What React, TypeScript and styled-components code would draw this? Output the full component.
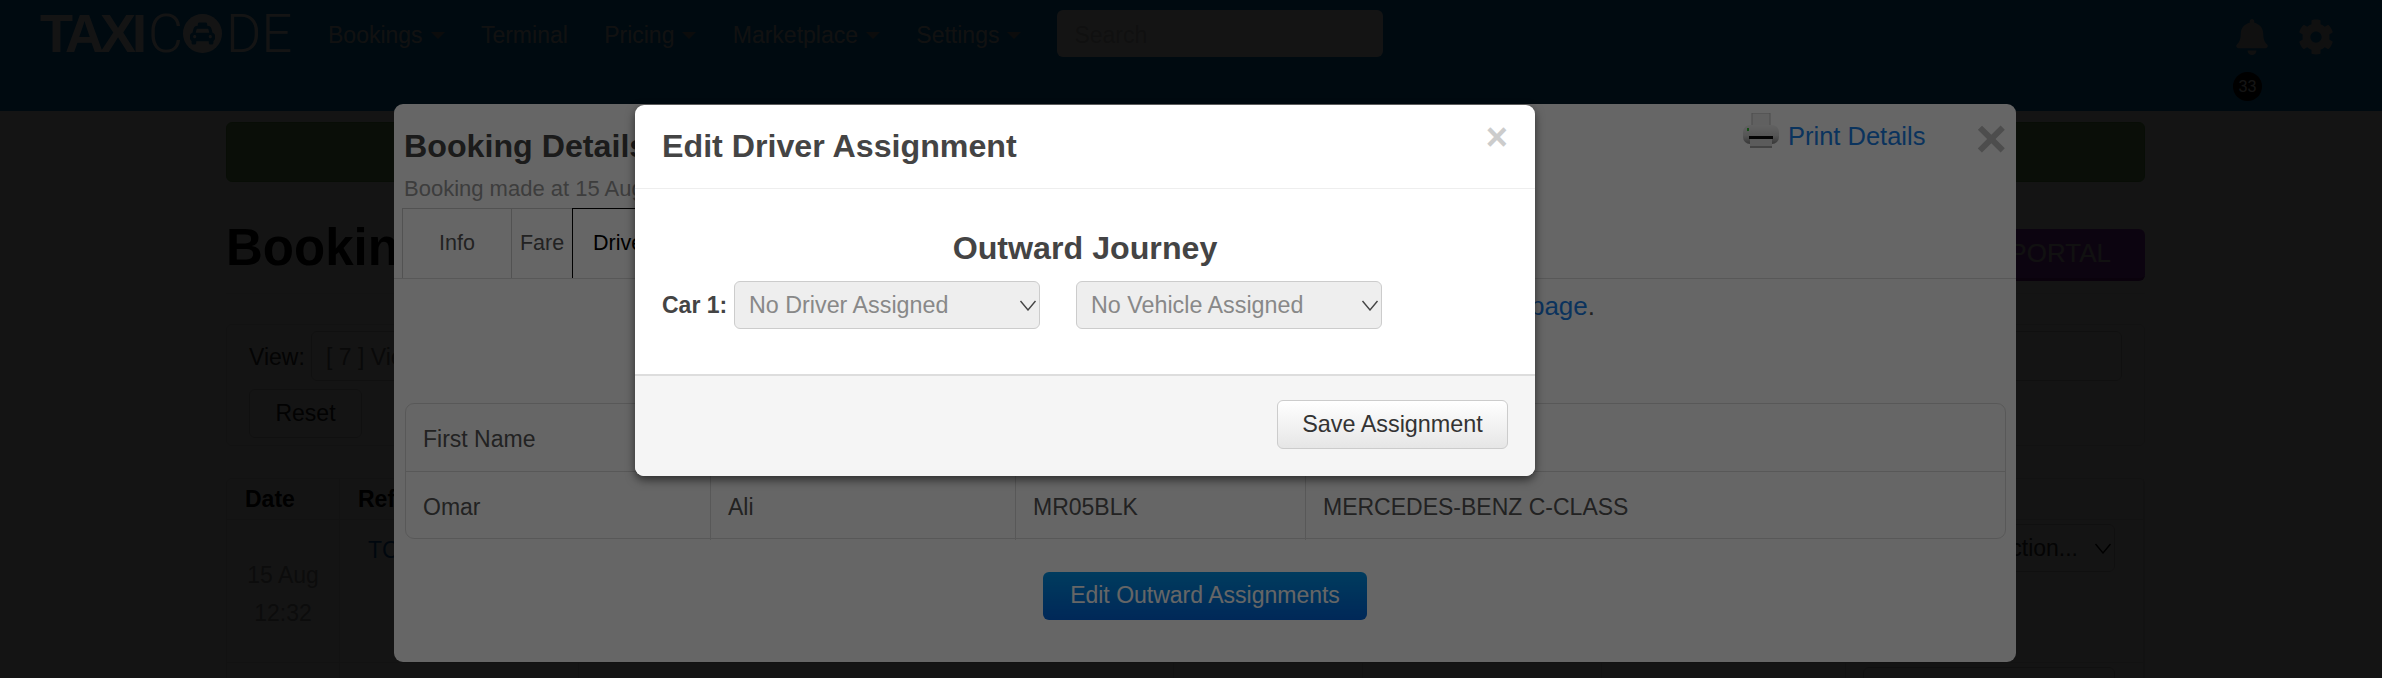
import styled, { createGlobalStyle } from 'styled-components'
import { FaBell, FaCog, FaTaxi } from 'react-icons/fa'

const GlobalStyle = createGlobalStyle`
	html, body {
		margin: 0;
		padding: 0;
		height: 100%;
		overflow: hidden;
		background: #fff;
	}
	* {
		box-sizing: border-box;
	}
	body {
		font-family: "Liberation Sans", Arial, sans-serif;
		font-size: 23px;
		color: #555;
	}
`

const navItems = [
	{ label: 'Bookings', caret: true },
	{ label: 'Terminal', caret: false },
	{ label: 'Pricing', caret: true },
	{ label: 'Marketplace', caret: true },
	{ label: 'Settings', caret: true },
]

const Chevron = ({ color = '#444' }: { color?: string }) => (
	<svg width="18" height="11" viewBox="0 0 18 11" fill="none">
		<path d="M1.5 1 L9 10 L16.5 1" stroke={color} strokeWidth="1.4" />
	</svg>
)

const PrinterIcon = () => (
	<svg width="36" height="36" viewBox="0 0 36 36">
		<defs>
			<linearGradient id="printerBody" x1="0" y1="0" x2="0" y2="1">
				<stop offset="0" stopColor="#f4f4f4" />
				<stop offset="0.55" stopColor="#d8d8d8" />
				<stop offset="1" stopColor="#8a8a8a" />
			</linearGradient>
		</defs>
		<rect x="9" y="0" width="18" height="14" fill="#f0f0f0" stroke="#bdbdbd" />
		<rect x="0" y="12" width="36" height="19" rx="7" fill="url(#printerBody)" />
		<rect x="4" y="15" width="2" height="3" fill="#33c033" />
		<rect x="6" y="23" width="24" height="3" fill="#0d0d0d" />
		<rect x="7" y="26" width="22" height="9" fill="#e4e4e4" />
		<rect x="7" y="33" width="22" height="2" fill="#a8a8a8" />
	</svg>
)

const App = () => {
	return (
		<Page>
			<GlobalStyle />
			<NavBar>
				<Logo>
					<LogoBold>TAXI</LogoBold>
					<LogoThin>C</LogoThin>
					<LogoCircle>
						<FaTaxi size={25} />
					</LogoCircle>
					<LogoThin>DE</LogoThin>
				</Logo>
				<NavList>
					{navItems.map((item) => (
						<NavItem key={item.label}>
							{item.label}
							{item.caret && <Caret />}
						</NavItem>
					))}
				</NavList>
				<SearchBox>Search</SearchBox>
				<NavIcons>
					<BellWrap>
						<FaBell size={36} />
						<Badge>33</Badge>
					</BellWrap>
					<FaCog size={36} />
				</NavIcons>
			</NavBar>

			<Content>
				<Alert />
				<HeadingRow>
					<Heading>Bookings</Heading>
					<PortalButton>PORTAL</PortalButton>
				</HeadingRow>
				<FilterPanel>
					<FilterRow>
						<FilterLabel>View:</FilterLabel>
						<FilterSelect>[ 7 ] View</FilterSelect>
						<UpdateBox>Update</UpdateBox>
					</FilterRow>
					<FilterRow>
						<GhostButton>Reset</GhostButton>
					</FilterRow>
				</FilterPanel>
				<BackTable>
					<BackRow $height={41}>
						<BackCell $bold>Date</BackCell>
						<BackCell $bold>Ref</BackCell>
						<BackCell />
						<BackCell />
						<BackCell />
						<BackCell />
						<BackCell />
					</BackRow>
					<BackRow $height={143}>
						<DateCell>
							<span>15 Aug</span>
							<span>12:32</span>
						</DateCell>
						<RefCell>TC</RefCell>
						<BackCell />
						<BackCell />
						<BackCell />
						<BackCell />
						<BackCell>
							<ActionSelect>
								Select Action...
								<Chevron color="#000" />
							</ActionSelect>
						</BackCell>
					</BackRow>
					<BackRow $height={20}>
						<BackCell />
						<BackCell />
						<BackCell />
						<BackCell />
						<BackCell />
						<BackCell />
						<BackCell>
							<ActionSelect />
						</BackCell>
					</BackRow>
				</BackTable>
			</Content>

			<Backdrop $alpha={0.8} />

			<ModalLayer $left={394} $top={104}>
				<OuterModal>
					<OuterHeader>
						<div>
							<OuterTitle>Booking Details</OuterTitle>
							<OuterSub>Booking made at 15 Aug</OuterSub>
						</div>
						<OuterActions>
							<PrinterIcon />
							<PrintLink>Print Details</PrintLink>
							<OuterClose>×</OuterClose>
						</OuterActions>
					</OuterHeader>
					<TabBar>
						<Tab $pad={36}>Info</Tab>
						<Tab $pad={8}>Fare</Tab>
						<Tab $pad={20} $active>
							Driver
						</Tab>
					</TabBar>
					<NoticeRow>
						<NoticeLink>page</NoticeLink>.
					</NoticeRow>
					<DriverTable>
						<DriverRow>
							<DriverCell>First Name</DriverCell>
							<DriverCell />
							<DriverCell />
							<DriverCell />
						</DriverRow>
						<DriverRow $last>
							<DriverCell>Omar</DriverCell>
							<DriverCell>Ali</DriverCell>
							<DriverCell>MR05BLK</DriverCell>
							<DriverCell>MERCEDES-BENZ C-CLASS</DriverCell>
						</DriverRow>
					</DriverTable>
					<ButtonRow>
						<PrimaryButton>Edit Outward Assignments</PrimaryButton>
					</ButtonRow>
				</OuterModal>
			</ModalLayer>

			<Backdrop $alpha={0.6} />

			<ModalLayer $left={635} $top={105}>
				<InnerModal>
					<InnerHeader>
						<InnerTitle>Edit Driver Assignment</InnerTitle>
						<InnerClose>×</InnerClose>
					</InnerHeader>
					<InnerBody>
						<JourneyTitle>Outward Journey</JourneyTitle>
						<CarRow>
							<CarLabel>Car 1:</CarLabel>
							<AssignSelect>
								No Driver Assigned
								<Chevron />
							</AssignSelect>
							<AssignSelect>
								No Vehicle Assigned
								<Chevron />
							</AssignSelect>
						</CarRow>
					</InnerBody>
					<InnerFooter>
						<SaveButton>Save Assignment</SaveButton>
					</InnerFooter>
				</InnerModal>
			</ModalLayer>
		</Page>
	)
}

export default App

const Page = styled.div`
	position: relative;
	height: 678px;
	overflow: hidden;
	background: #fff;
`

const NavBar = styled.header`
	display: flex;
	align-items: flex-start;
	height: 111px;
	padding: 10px 48px 0 40px;
	background: #007dc8;
	color: #ddd;
`

const Logo = styled.div`
	display: flex;
	align-items: center;
	width: 252px;
	height: 47px;
	margin-right: 36px;
	color: #fff;
	font-size: 54px;
`

const LogoBold = styled.span`
	font-weight: 700;
	letter-spacing: -4px;
	line-height: 47px;
	margin-right: 5px;
`

const LogoThin = styled.span`
	font-family: Roboto, "Liberation Sans", sans-serif;
	font-weight: 300;
	line-height: 47px;
`

const LogoCircle = styled.span`
	display: flex;
	align-items: center;
	justify-content: center;
	flex: none;
	width: 39px;
	height: 39px;
	margin-right: 4px;
	border-radius: 50%;
	background: #fff;
	color: #007dc8;
`

const NavList = styled.nav`
	display: flex;
	gap: 36.3px;
	height: 47px;
	align-items: center;
	margin-top: 2px;
`

const NavItem = styled.span`
	display: flex;
	align-items: center;
	font-size: 23px;
`

const Caret = styled.i`
	width: 0;
	height: 0;
	margin-left: 8px;
	border-left: 7px solid transparent;
	border-right: 7px solid transparent;
	border-top: 7px solid #999;
`

const SearchBox = styled.div`
	width: 326px;
	height: 47px;
	margin-left: 36px;
	padding: 12px 17px;
	background: #fff;
	border-radius: 6px;
	color: #ccc;
	font-size: 23px;
`

const NavIcons = styled.div`
	display: flex;
	gap: 28px;
	margin-left: auto;
	padding-top: 9px;
	color: #ccc;
`

const BellWrap = styled.div`
	position: relative;
	height: 46px;
`

const Badge = styled.span`
	position: absolute;
	left: -1px;
	top: 53px;
	display: flex;
	align-items: center;
	justify-content: center;
	width: 29px;
	height: 29px;
	border-radius: 50%;
	background: #000;
	color: #fff;
	font-size: 16px;
`

const Content = styled.main`
	width: 1919px;
	margin-left: 226px;
	padding-top: 11px;
	color: #333;
`

const Alert = styled.div`
	height: 60px;
	background: #7dbb64;
	border-radius: 6px;
	border: 1px solid #6aa852;
`

const HeadingRow = styled.div`
	display: flex;
	justify-content: space-between;
	align-items: flex-start;
	height: 112px;
	padding-top: 47px;
	border-bottom: 1px solid #eee;
`

const Heading = styled.h1`
	margin: -10px 0 0;
	font-size: 51px;
	line-height: 58px;
	color: #000;
`

const PortalButton = styled.div`
	width: 300px;
	height: 52px;
	padding: 0 34px 4px 0;
	border-bottom: 3px solid #7d1e9e;
	border-radius: 6px;
	background: #a23ec8;
	color: #ddd;
	font-size: 26px;
	line-height: 48px;
	text-align: right;
`

const FilterPanel = styled.section`
	height: 122px;
	margin-top: 30px;
	padding: 6px 22px 0;
	border: 1px solid #e5e5e5;
	border-radius: 6px;
`

const FilterRow = styled.div`
	display: flex;
	align-items: center;
	margin-bottom: 8px;
`

const FilterLabel = styled.span`
	width: 62px;
	padding-top: 2px;
	font-size: 23px;
`

const FilterSelect = styled.div`
	width: 300px;
	height: 50px;
	padding: 12px 14px;
	border: 1px solid #ccc;
	border-radius: 6px;
	color: #777;
`

const UpdateBox = styled.div`
	width: 370px;
	height: 50px;
	margin-left: auto;
	padding: 12px 14px;
	border: 1px solid #ccc;
	border-radius: 6px;
	color: #777;
	text-align: center;
`

const GhostButton = styled.div`
	width: 113px;
	height: 49px;
	border: 1px solid #ccc;
	border-radius: 6px;
	color: #222;
	font-size: 23px;
	line-height: 47px;
	text-align: center;
`

const BackTable = styled.section`
	margin-top: 32px;
	border: 1px solid #e5e5e5;
	border-radius: 6px;
`

const BackRow = styled.div<{ $height: number }>`
	display: grid;
	grid-template-columns: 113px 239px 595px 189px 239px 244px 1fr;
	height: ${(p) => p.$height}px;
	border-bottom: 1px solid #e5e5e5;
`

const BackCell = styled.div<{ $bold?: boolean }>`
	padding: 0 18px;
	border-right: 1px solid #e5e5e5;
	color: #000;
	font-size: 23px;
	font-weight: ${(p) => (p.$bold ? 700 : 400)};
	line-height: 41px;
`

const DateCell = styled.div`
	display: flex;
	flex-direction: column;
	align-items: center;
	gap: 12px;
	padding-top: 42px;
	border-right: 1px solid #e5e5e5;
	color: #999;
	line-height: 26px;
`

const RefCell = styled.div`
	padding: 16px 28px;
	border-right: 1px solid #e5e5e5;
	color: #0a5fb4;
	line-height: 28px;
`

const ActionSelect = styled.div`
	display: flex;
	align-items: center;
	justify-content: flex-end;
	gap: 16px;
	width: 252px;
	height: 48px;
	margin: 4px 0 0 -1px;
	padding-right: 2px;
	border: 1px solid #ccc;
	border-radius: 6px;
	color: #333;
`

const Backdrop = styled.div<{ $alpha: number }>`
	position: absolute;
	inset: 0;
	background: rgba(0, 0, 0, ${(p) => p.$alpha});
`

const ModalLayer = styled.div<{ $left: number; $top: number }>`
	position: absolute;
	inset: 0;
	padding: ${(p) => p.$top}px 0 0 ${(p) => p.$left}px;
`

const OuterModal = styled.div`
	display: flex;
	flex-direction: column;
	width: 1622px;
	height: 558px;
	background: #fff;
	border-radius: 9px;
`

const OuterHeader = styled.div`
	display: flex;
	justify-content: space-between;
	height: 104px;
	padding: 23px 9px 0 10px;
`

const OuterTitle = styled.h3`
	margin: 0;
	font-size: 32.2px;
	line-height: 38px;
	color: #444;
`

const OuterSub = styled.div`
	margin-top: 10px;
	color: #999;
	font-size: 22px;
	line-height: 28px;
`

const OuterActions = styled.div`
	display: flex;
	align-items: flex-start;
	height: 44px;
	margin-top: -14px;
`

const PrintLink = styled.a`
	margin: 8px 50px 0 9px;
	color: #1a80e8;
	font-size: 25.5px;
	line-height: 30px;
`

const OuterClose = styled.span`
	color: #c0c0c0;
	font-size: 54px;
	font-weight: 700;
	line-height: 50px;
`

const TabBar = styled.div`
	display: flex;
	height: 71px;
	padding-left: 8px;
	border-bottom: 1px solid #ddd;
`

const Tab = styled.div<{ $pad: number; $active?: boolean }>`
	position: relative;
	height: 70px;
	margin-right: -1px;
	padding: 0 ${(p) => p.$pad}px;
	border: 1px solid ${(p) => (p.$active ? '#000' : '#ccc')};
	border-bottom: 0;
	color: ${(p) => (p.$active ? '#000' : '#555')};
	font-size: 21.5px;
	line-height: 68px;
`

const NoticeRow = styled.div`
	height: 124px;
	padding: 13px 421px 0 0;
	color: #555;
	font-size: 26px;
	line-height: 28px;
	text-align: right;
`

const NoticeLink = styled.a`
	color: #1a80e8;
`

const DriverTable = styled.div`
	height: 136px;
	margin: 0 10px 0 11px;
	border: 1px solid #ddd;
	border-radius: 9px;
`

const DriverRow = styled.div<{ $last?: boolean }>`
	display: grid;
	grid-template-columns: 305px 305px 290px 1fr;
	height: ${(p) => (p.$last ? 66 : 68)}px;
	border-bottom: ${(p) => (p.$last ? 0 : '1px solid #ddd')};
`

const DriverCell = styled.div`
	padding: 2px 17px 0;
	border-right: 1px solid #ddd;
	color: #555;
	font-size: 23px;
	line-height: 66px;
	&:last-child {
		border-right: 0;
	}
`

const ButtonRow = styled.div`
	display: flex;
	justify-content: center;
	margin-top: 33px;
`

const PrimaryButton = styled.div`
	width: 324px;
	height: 48px;
	border-radius: 6px;
	background: linear-gradient(#0096eb, #0064dc);
	color: #fff;
	font-size: 23px;
	line-height: 46px;
	text-align: center;
`

const InnerModal = styled.div`
	display: flex;
	flex-direction: column;
	width: 900px;
	height: 371px;
	background: #fff;
	border-radius: 9px;
	box-shadow: 0 4px 10px rgba(0, 0, 0, 0.55);
`

const InnerHeader = styled.div`
	display: flex;
	justify-content: space-between;
	align-items: flex-start;
	height: 84px;
	padding: 21px 27px 0 27px;
	border-bottom: 1px solid #eee;
`

const InnerTitle = styled.h3`
	margin: 0;
	color: #444;
	font-size: 32.2px;
	line-height: 40px;
`

const InnerClose = styled.span`
	margin-top: -9px;
	color: #ccc;
	font-size: 38px;
	font-weight: 700;
	line-height: 40px;
`

const InnerBody = styled.div`
	flex: 1;
	padding: 39px 27px 0;
`

const JourneyTitle = styled.h4`
	margin: 0 0 13px;
	color: #444;
	font-size: 32.2px;
	line-height: 40px;
	text-align: center;
`

const CarRow = styled.div`
	display: flex;
	align-items: center;
	gap: 36px;
`

const CarLabel = styled.label`
	width: 64px;
	margin-right: -28px;
	color: #444;
	font-size: 23px;
	font-weight: 700;
	white-space: nowrap;
`

const AssignSelect = styled.div`
	display: flex;
	align-items: center;
	justify-content: space-between;
	width: 306px;
	height: 48px;
	padding: 0 2px 0 14px;
	background: #eee;
	border: 1px solid #ccc;
	border-radius: 6px;
	color: #888;
	font-size: 23.3px;
`

const InnerFooter = styled.div`
	display: flex;
	justify-content: flex-end;
	height: 102px;
	padding: 24px 27px 0 0;
	background: #f5f5f5;
	border-top: 2px solid #ddd;
	border-radius: 0 0 9px 9px;
`

const SaveButton = styled.div`
	width: 231px;
	height: 49px;
	background: linear-gradient(#fff, #e6e6e6);
	border: 1px solid #ccc;
	border-radius: 6px;
	color: #333;
	font-size: 23.4px;
	line-height: 46px;
	text-align: center;
`
